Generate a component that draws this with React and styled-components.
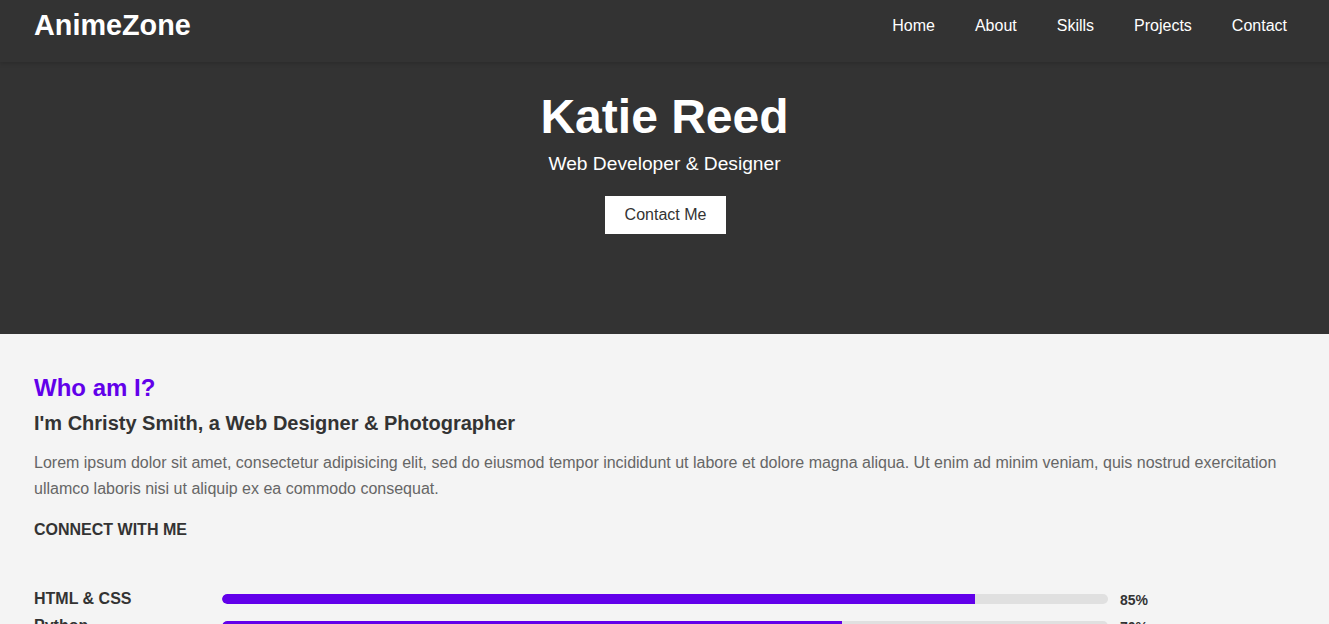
import React from 'react'
import styled, { createGlobalStyle } from "styled-components";

const GlobalStyle = createGlobalStyle`
* { box-sizing: border-box; }
body {
	margin: 0;
	font-family: "Liberation Sans", Arial, sans-serif;
	background: #f4f4f4;
	color: #333;
}
`

const links = ["Home", "About", "Skills", "Projects", "Contact"];

const skills = [
	{ name: "HTML & CSS", value: 85 },
	{ name: "Python", value: 70 },
];

const App = () =>
{
	return (
		<>
			<GlobalStyle />
			<Header>
				<Logo>AnimeZone</Logo>
				<Nav>
					{links.map((link) => (
						<NavLink key={link} href="#">{link}</NavLink>
					))}
				</Nav>
			</Header>
			<Hero>
				<Title>Katie Reed</Title>
				<Subtitle>Web Developer &amp; Designer</Subtitle>
				<HeroButton>Contact Me</HeroButton>
			</Hero>
			<About>
				<SectionTitle>Who am I?</SectionTitle>
				<Intro>I'm Christy Smith, a Web Designer &amp; Photographer</Intro>
				<Text>
					Lorem ipsum dolor sit amet, consectetur adipisicing elit, sed do eiusmod tempor incididunt ut labore et dolore magna aliqua. Ut enim ad minim veniam, quis nostrud exercitation ullamco laboris nisi ut aliquip ex ea commodo consequat.
				</Text>
				<Connect>CONNECT WITH ME</Connect>
				<Skills>
					{skills.map((skill) => (
						<SkillRow key={skill.name}>
							<SkillName>{skill.name}</SkillName>
							<Track>
								<Fill style={{ width: `${skill.value}%` }} />
							</Track>
							<Percent>{skill.value}%</Percent>
						</SkillRow>
					))}
				</Skills>
			</About>
		</>
	)
}

const Header = styled.header`
display: flex;
justify-content: space-between;
align-items: center;
height: 62px;
padding: 0 34px 12px;
background: #333;
box-shadow: 0 2px 4px rgba(0, 0, 0, 0.15);
position: relative;
z-index: 1;
`
const Logo = styled.div`
font-size: 28.8px;
font-weight: bold;
color: #fff;
line-height: 33px;
`
const Nav = styled.nav`
display: flex;
gap: 24px;
`
const NavLink = styled.a`
color: #fff;
text-decoration: none;
font-size: 16px;
padding: 0 8px;
line-height: 18px;
margin-top: 2px;
`
const Hero = styled.section`
display: flex;
flex-direction: column;
align-items: center;
height: 272px;
padding-top: 27px;
background: #333;
color: #fff;
`
const Title = styled.h1`
margin: 0;
font-size: 48px;
line-height: 55px;
font-weight: bold;
`
const Subtitle = styled.p`
margin: 9px 0 0;
font-size: 19.2px;
line-height: 22px;
`
const HeroButton = styled.button`
margin: 21px 0 0 2px;
padding: 10px 20px;
border: none;
background: #fff;
color: #333;
font-family: inherit;
font-size: 16px;
line-height: 18px;
cursor: pointer;
`
const About = styled.section`
padding: 40px 34px 40px;
background: #f4f4f4;
`
const SectionTitle = styled.h2`
margin: 0;
font-size: 24px;
line-height: 28px;
color: #6200ea;
`
const Intro = styled.h3`
margin: 10px 0 0;
font-size: 20px;
line-height: 23px;
color: #333;
`
const Text = styled.p`
margin: 15px 0 0;
font-size: 16px;
line-height: 26px;
color: #666;
`
const Connect = styled.h4`
margin: 19px 0 0;
font-size: 16px;
line-height: 18px;
color: #333;
`
const Skills = styled.div`
margin-top: 51px;
display: flex;
flex-direction: column;
gap: 9px;
`
const SkillRow = styled.div`
display: flex;
align-items: center;
height: 18px;
`
const SkillName = styled.span`
flex: 0 0 188px;
font-size: 16px;
font-weight: bold;
color: #333;
`
const Track = styled.div`
flex: 0 0 886px;
height: 10px;
border-radius: 5px;
background: #e0e0e0;
overflow: hidden;
`
const Fill = styled.div`
height: 100%;
background: #6200ea;
border-radius: 5px 0 0 5px;
`
const Percent = styled.span`
margin-left: 12px;
font-size: 14px;
font-weight: bold;
color: #333;
padding-top: 1px;
`

export default App
